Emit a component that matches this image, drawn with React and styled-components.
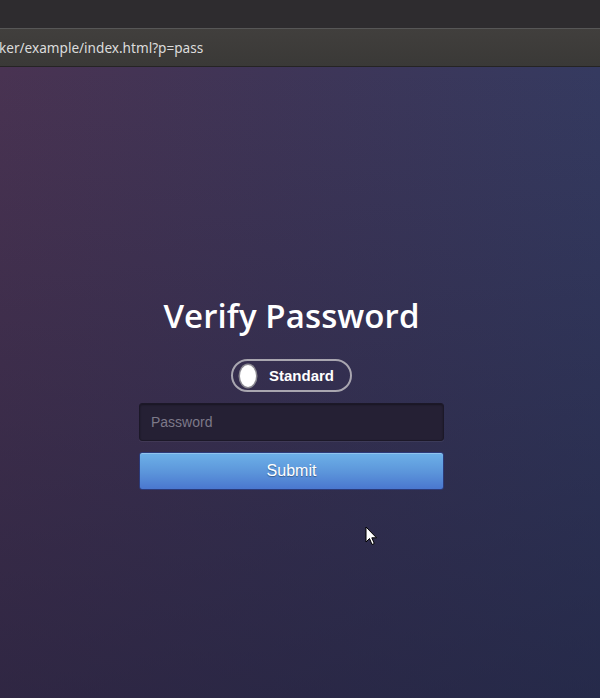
import React from "react";
import styled, { createGlobalStyle } from "styled-components";

const Global = createGlobalStyle`
  html, body { margin: 0; padding: 0; }
  body { width: 600px; height: 698px; overflow: hidden; background: #2d2b2e; }
  #root { height: 698px; }
`;

const Window = styled.div`
  position: relative;
  width: 600px;
  height: 698px;
  display: flex;
  flex-direction: column;
  overflow: hidden;
`;

const TitleBar = styled.div`
  height: 28px;
  background: #2e2c2f;
  border-bottom: 1px solid #575757;
`;

const UrlBar = styled.div`
  height: 37px;
  background: linear-gradient(to bottom, #413f3d, #3a3937);
  border-bottom: 1px solid #252424;
  display: flex;
  align-items: center;
  overflow: hidden;
`;

const UrlText = styled.span`
  font-family: "Noto Sans", "DejaVu Sans", sans-serif;
  font-size: 13.6px;
  color: #dcdcdc;
  white-space: nowrap;
  margin-left: -1px;
  padding-bottom: 1px;
`;

const Page = styled.main`
  flex: 1;
  background:
    linear-gradient(to bottom, rgba(30, 30, 60, 0) 0%, rgba(22, 26, 52, 0.5) 100%),
    linear-gradient(to right, #493352 0%, #3f3557 45%, #353a60 100%);
  display: flex;
  flex-direction: column;
  align-items: center;
  padding: 227px 17px 0 0;
`;

const Heading = styled.h1`
  margin: 0;
  font-family: "Open Sans", "Noto Sans", sans-serif;
  font-weight: 600;
  font-size: 33px;
  line-height: 44px;
  color: #ffffff;
  letter-spacing: 0.1px;
`;

const Toggle = styled.div`
  margin-top: 21px;
  width: 121px;
  height: 33px;
  box-sizing: border-box;
  border: 2px solid #a9a6b0;
  border-radius: 17px;
  display: flex;
  align-items: center;
  padding-left: 7px;
`;

const Knob = styled.span`
  width: 16px;
  height: 22px;
  border-radius: 50%;
  background: #ffffff;
  box-shadow: 0 0 0 1.5px #8a8890;
`;

const ToggleLabel = styled.span`
  margin-left: 13px;
  font-family: "Liberation Sans", Arial, sans-serif;
  font-weight: 700;
  font-size: 15px;
  color: #ffffff;
`;

const Form = styled.form`
  margin-top: 11px;
  width: 305px;
  display: flex;
  flex-direction: column;
  gap: 11px;
`;

const Input = styled.input`
  box-sizing: border-box;
  width: 100%;
  height: 38px;
  padding: 0 11px;
  border-radius: 3px;
  border: 1px solid #1c1828;
  background: #252034;
  box-shadow: inset 0 1px 2px rgba(0, 0, 0, 0.35), 0 1px 0 rgba(255, 255, 255, 0.06);
  font-family: "Liberation Sans", Arial, sans-serif;
  font-size: 14px;
  color: #ddd;
  outline: none;
  &::placeholder { color: #7d7989; }
`;

const Submit = styled.button`
  box-sizing: border-box;
  width: 100%;
  height: 38px;
  border-radius: 3px;
  border: 1px solid #2c3a78;
  background: linear-gradient(to bottom, #6db1e8 0%, #5b94da 55%, #4a77cf 100%);
  box-shadow: inset 0 1px 0 rgba(255, 255, 255, 0.25);
  font-family: "Liberation Sans", Arial, sans-serif;
  font-size: 16px;
  color: #ffffff;
  text-shadow: 0 1px 1px rgba(0, 0, 0, 0.35);
  padding: 0;
`;

const Cursor = styled.svg`
  position: absolute;
  left: 365px;
  top: 526px;
`;

export default function App() {
  return (
    <>
      <Global />
      <Window>
        <TitleBar />
        <UrlBar>
          <UrlText>ker/example/index.html?p=pass</UrlText>
        </UrlBar>
        <Page>
          <Heading>Verify Password</Heading>
          <Toggle>
            <Knob />
            <ToggleLabel>Standard</ToggleLabel>
          </Toggle>
          <Form onSubmit={(e) => e.preventDefault()}>
            <Input type="password" placeholder="Password" />
            <Submit type="submit">Submit</Submit>
          </Form>
        </Page>
        <Cursor width="13" height="20" viewBox="0 0 13 20">
          <path
            d="M1 1 L1 16 L4.5 12.5 L7 18.5 L9.3 17.5 L6.8 11.8 L11.5 11.8 Z"
            fill="#ffffff"
            stroke="#000000"
            strokeWidth="1"
            strokeLinejoin="round"
          />
        </Cursor>
      </Window>
    </>
  );
}
